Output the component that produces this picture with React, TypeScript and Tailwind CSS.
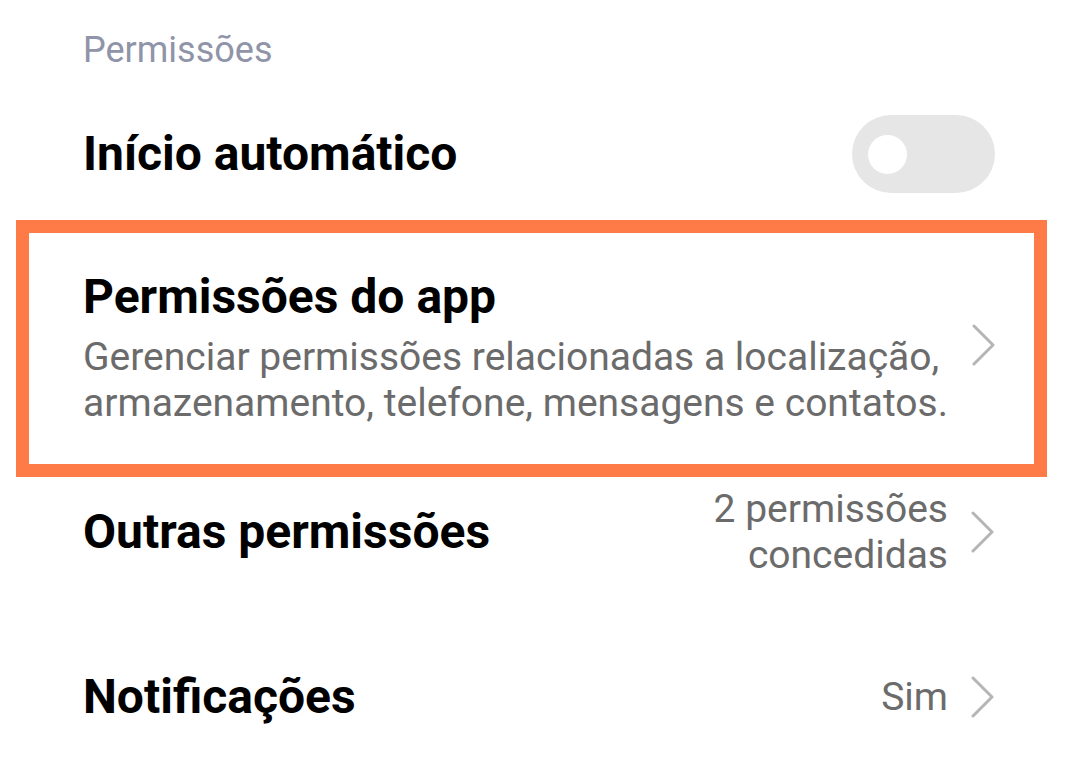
import React from "react";

function Chevron() {
  return (
    <svg width="24" height="42" viewBox="0 0 24 42" fill="none" className="shrink-0">
      <polyline points="2,2 21,21 2,40" stroke="#b5b5b5" strokeWidth="3" strokeLinecap="round" strokeLinejoin="round" />
    </svg>
  );
}

function Toggle() {
  return (
    <div className="flex h-[78px] w-[143px] items-center rounded-full bg-[#e6e6e6] pl-[16px]">
      <div className="h-[39px] w-[39px] rounded-full bg-white" />
    </div>
  );
}

export default function App() {
  return (
    <div className="min-h-screen bg-white font-['Roboto',sans-serif] antialiased">
      {/* section header */}
      <div className="h-[98px] px-[83px] pt-[29px] text-[36px] leading-[42px] text-[#8f94a8]">
        Permissões
      </div>

      <div className="flex h-[112px] items-center justify-between pl-[83px] pr-[85px]">
        <span className="text-[48px] leading-[56px] font-bold text-black">Início automático</span>
        <Toggle />
      </div>

      {/* highlighted row */}
      <div className="mt-[10px] ml-[16px] mr-[33px] flex items-center justify-between border-[13px] border-[#fe7b47] pl-[54px] pr-[38px] pt-[36px] pb-[38px]">
        <div className="flex flex-col gap-[9px]">
          <span className="text-[48px] leading-[56px] font-bold text-black">Permissões do app</span>
          <span className="text-[39px] leading-[46px] text-[#6b6b6b]">
            Gerenciar permissões relacionadas a localização,
            <br />
            armazenamento, telefone, mensagens e contatos.
          </span>
        </div>
        <div className="mb-[6px]">
          <Chevron />
        </div>
      </div>

      <div className="flex h-[110px] items-center justify-between pl-[83px] pr-[85px]">
        <span className="text-[48px] leading-[56px] font-bold text-black">Outras permissões</span>
        <div className="flex items-center gap-[23px]">
          <span className="text-right text-[39px] leading-[46px] text-[#6b6b6b]">
            2 permissões
            <br />
            concedidas
          </span>
          <Chevron />
        </div>
      </div>

      <div className="mt-[55px] flex h-[110px] items-center justify-between pl-[83px] pr-[85px]">
        <span className="text-[48px] leading-[56px] font-bold text-black">Notificações</span>
        <div className="flex items-center gap-[23px]">
          <span className="text-[39px] leading-[46px] text-[#6b6b6b]">Sim</span>
          <Chevron />
        </div>
      </div>
    </div>
  );
}
